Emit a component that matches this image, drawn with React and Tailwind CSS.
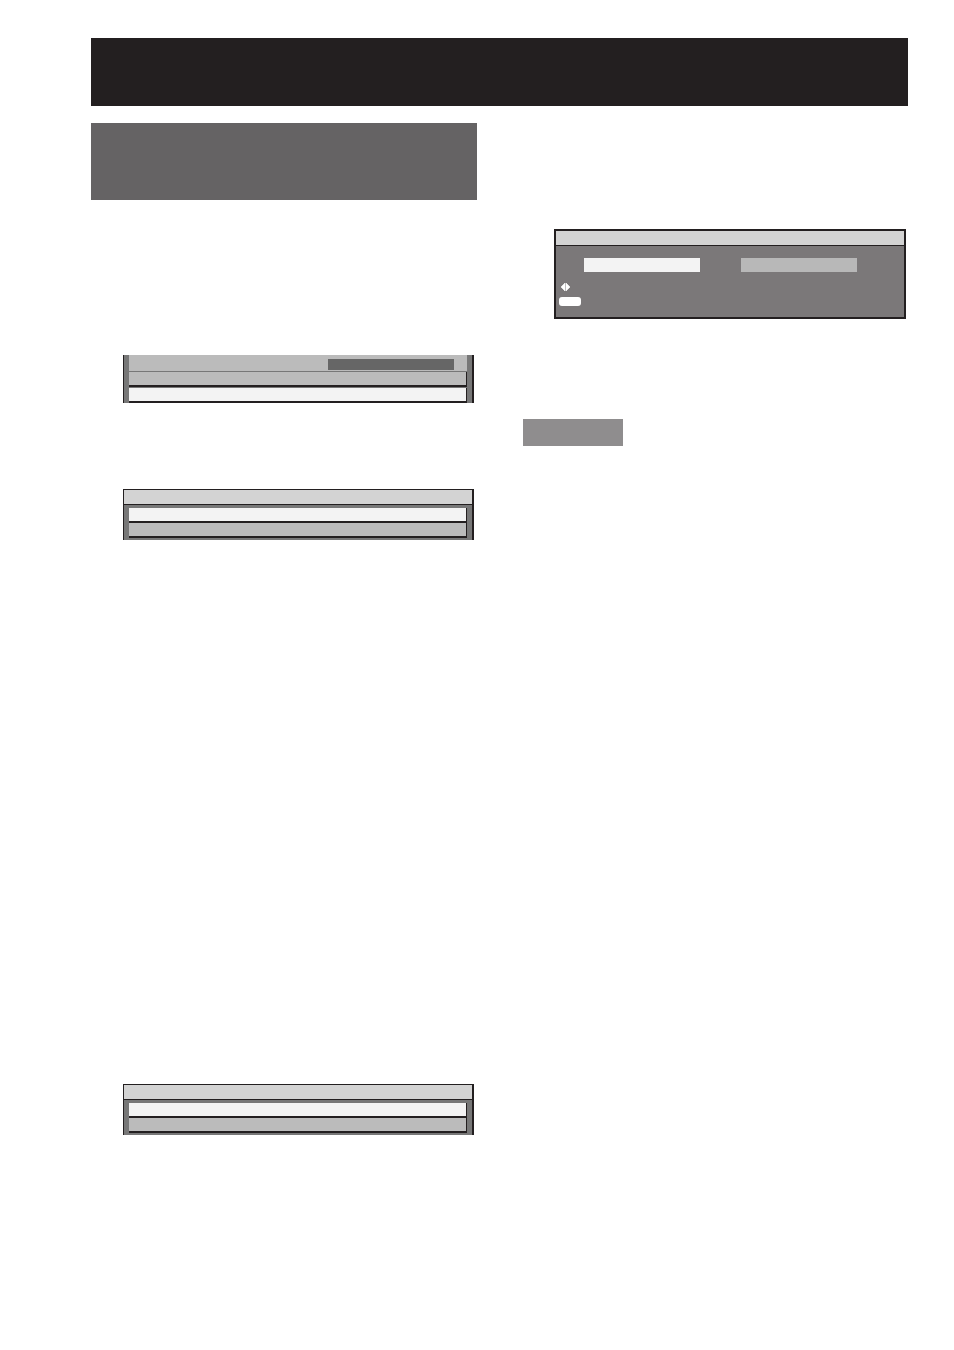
function ListMenu() {
  return (
    <div className="w-[351px] flex flex-col">
      <div className="h-[16px] bg-[#d3d3d3] border-t border-b border-l border-r-2 border-[#231f20]" />
      <div className="bg-[#777] border-l border-r-2 border-[#231f20] pl-[5px] pr-[5px] pt-[3px] pb-[2px] flex flex-col">
        <div className="h-[15px] bg-[#f3f3f3] border-b-2 border-r border-[#231f20]" />
        <div className="h-[15px] bg-[#bbb] border-b-2 border-r border-[#231f20]" />
      </div>
    </div>
  );
}

export default function App() {
  return (
    <div className="w-[954px] h-[1350px] bg-white overflow-hidden" style={{ fontFamily: '"Liberation Sans", Arial, sans-serif' }}>
      <div className="pt-[38px] pl-[91px]">
        <div className="w-[817px] h-[68px] bg-[#231f20]" />
        <div className="flex mt-[17px]">
          {/* Left column */}
          <div className="w-[386px] flex flex-col">
            <div className="h-[77px] bg-[#656364]" />

            {/* Menu 1 */}
            <div className="mt-[155px] ml-[32px] w-[351px] flex">
              <div className="w-[6px] bg-[#777] border-l border-[#231f20]" />
              <div className="flex-1 flex flex-col">
                <div className="h-[17px] bg-[#bbb] border-b border-[#777] flex justify-end pt-[4px] pr-[13px]">
                  <div className="w-[126px] h-[11px] bg-[#666]" />
                </div>
                <div className="h-[15px] bg-[#bbb] border-b-2 border-r border-[#231f20]" />
                <div className="h-[16px] bg-[#777] pt-[1px]">
                  <div className="h-[15px] bg-[#f3f3f3] border-b-2 border-r border-[#231f20]" />
                </div>
              </div>
              <div className="w-[7px] bg-[#777] border-r-2 border-[#231f20]" />
            </div>

            {/* Menu 2 */}
            <div className="mt-[86px] ml-[32px]">
              <ListMenu />
            </div>

            {/* Menu 3 */}
            <div className="mt-[544px] ml-[32px]">
              <ListMenu />
            </div>
          </div>

          {/* Right column */}
          <div className="ml-[46px] flex flex-col">
            <div className="mt-[106px] ml-[31px] w-[352px] h-[90px] border-2 border-[#231f20] flex flex-col">
              <div className="h-[15px] bg-[#d3d3d3] border-b border-[#231f20]" />
              <div className="flex-1 bg-[#7b7879] flex flex-col">
                <div className="flex gap-[41px] pl-[28px] pt-[12px]">
                  <div className="w-[116px] h-[14px] bg-[#f3f3f3]" />
                  <div className="w-[116px] h-[14px] bg-[#b8b8b8]" />
                </div>
                <div className="pl-[5px] mt-[11px] h-[8px] flex">
                  <svg width="9" height="8" viewBox="0 0 9 8">
                    <polygon points="0,4 4,0 4,8" fill="#fff" strokeLinejoin="round" stroke="#fff" strokeWidth="0.6" />
                    <polygon points="5,0 5,8 9,4" fill="#fff" strokeLinejoin="round" stroke="#fff" strokeWidth="0.6" />
                  </svg>
                </div>
                <div className="pl-[3px] mt-[6px]">
                  <div className="w-[22px] h-[9px] bg-white rounded-[3px]" />
                </div>
              </div>
            </div>
            <div className="mt-[100px] w-[100px] h-[27px] bg-[#8f8d8e]" />
          </div>
        </div>
      </div>
    </div>
  );
}
